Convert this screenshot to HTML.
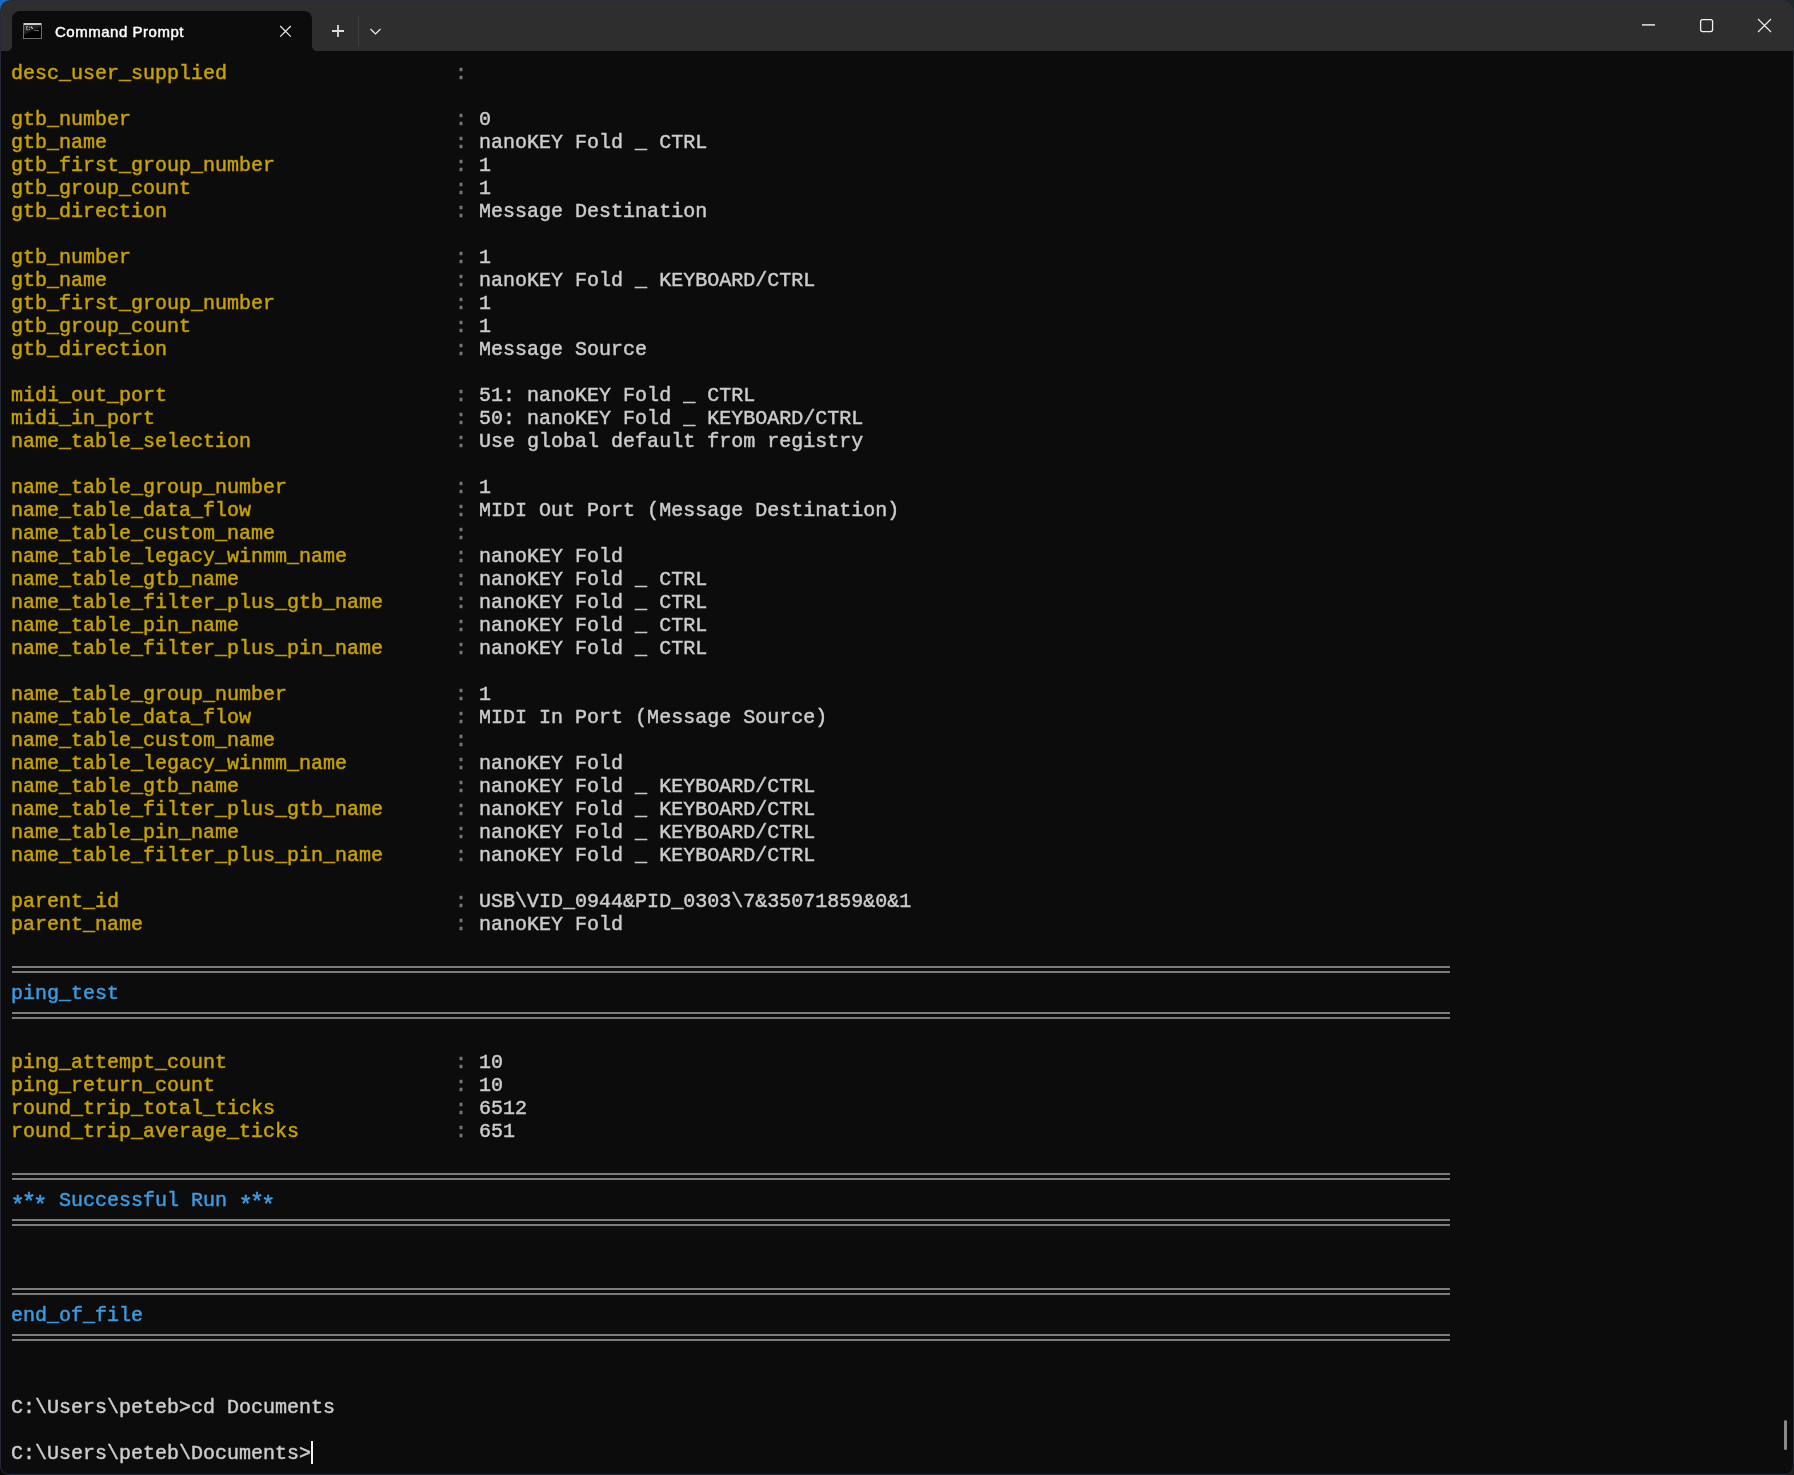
<!DOCTYPE html>
<html><head><meta charset="utf-8"><title>Command Prompt</title>
<style>
html,body{margin:0;padding:0;width:1794px;height:1475px;overflow:hidden;background:#0b0b0b;position:relative;}
#frame{position:absolute;left:0;top:0;width:1794px;height:1475px;border-radius:9px;background:#272b38;}
.cn{position:absolute;width:14px;height:14px;}
#corner{position:absolute;left:0;top:0;width:16px;height:16px;background:radial-gradient(circle at 0 0,#1a6cc0 0,#1a6cc0 6px,#272b38 11px);}
#win{position:absolute;left:1px;top:1px;width:1792px;height:1473px;border-radius:8px;background:#0c0c0c;overflow:hidden;}
#title{position:absolute;left:0;top:0;width:1792px;height:50px;background:#2e2e2e;}
#tab{position:absolute;left:11px;top:10px;width:300px;height:40px;background:#0c0c0c;border-radius:8px 8px 0 0;}
#term{will-change:transform;position:absolute;left:10px;top:61px;-webkit-text-stroke-width:0.45px;font-family:"Liberation Mono",monospace;font-size:20px;line-height:23px;color:#cccccc;}
.r{height:23px;position:relative;white-space:pre;}
.y{color:#c8a200;}
.g{color:#767676;}
.c{color:#3c9ce3;}
.s::before,.s::after{content:"";position:absolute;left:1px;width:1438px;height:2px;background:#7c7c7c;}
.s::before{top:7px;}
.s::after{top:12px;}
#tabinvL{position:absolute;left:6px;top:45px;width:5px;height:5px;background:radial-gradient(circle at 0 0,#2e2e2e 4.6px,#0c0c0c 5.4px);}
#tabinvR{position:absolute;left:311px;top:45px;width:5px;height:5px;background:radial-gradient(circle at 100% 0,#2e2e2e 4.6px,#0c0c0c 5.4px);}
#tabtitle{will-change:transform;position:absolute;left:54px;top:21px;font-family:"Liberation Sans",sans-serif;font-size:15px;letter-spacing:0.52px;-webkit-text-stroke:0.45px #fff;line-height:20px;color:#ffffff;white-space:nowrap;}
#scroll{position:absolute;left:1783px;top:1419px;width:3px;height:30px;border-radius:2px;background:#8a8a8a;}
#cursor{position:absolute;left:310px;top:1440px;width:1.5px;height:23px;background:#f2f2f2;}
.a1,.a2,.a3{display:inline-block;}
.a1{transform:translate(0.7px,5.7px) scale(1.2);}
.a2{transform:translate(0px,3px) scale(1.2);}
.a3{transform:translate(-0.9px,5.7px) scale(1.2);}
</style></head><body>
<div class="cn" style="right:0;top:0;background:#1f292d"></div><div class="cn" style="right:0;bottom:0;background:#1e1e1e"></div><div class="cn" style="left:0;bottom:0;background:#080808"></div>
<div id="frame"></div>
<div id="corner"></div>
<div id="win">
<div id="title"></div>
<div id="tab"></div>
<div id="tabinvL"></div><div id="tabinvR"></div>
<svg id="icons" width="1792" height="50" style="position:absolute;left:0;top:0">
 <g transform="translate(-1,-1)">
  <defs><linearGradient id="ig" x1="0" y1="0" x2="0.6" y2="1"><stop offset="0" stop-color="#3a3a3a"/><stop offset="0.55" stop-color="#1a1a1a"/><stop offset="0.56" stop-color="#000"/></linearGradient></defs>
  <rect x="23.5" y="23.5" width="18" height="15" fill="#000" stroke="#6b6e73" stroke-width="1"/>
  <rect x="24" y="25" width="17" height="13" fill="url(#ig)"/>
  <rect x="24" y="23" width="17" height="2" fill="#c9ccd1"/>
  <path d="M28.2 26.6 h-1.6 v3.2 h1.6" stroke="#9a9a9a" stroke-width="1" fill="none"/>
  <rect x="29" y="26.8" width="1" height="1" fill="#aaa"/><rect x="29" y="28.9" width="1" height="1" fill="#aaa"/>
  <path d="M31 26.6 l1.6 2.2" stroke="#e6e6e6" stroke-width="1.1" fill="none"/>
  <rect x="34" y="30" width="5" height="0.8" fill="#777"/>
  <path d="M280.2 26 L290.8 36.6 M290.8 26 L280.2 36.6" stroke="#f0f0f0" stroke-width="1.15" fill="none"/>
  <path d="M332 31 H344 M338 25 V37" stroke="#dedede" stroke-width="1.8" fill="none"/>
  <rect x="358" y="16" width="1" height="30" fill="#3f3f3f"/>
  <path d="M370.5 29 L375.5 34 L380.5 29" stroke="#f0f0f0" stroke-width="1.2" fill="none"/>
  <rect x="1642" y="24.2" width="13" height="1.4" fill="#f0f0f0"/>
  <rect x="1700.6" y="19.6" width="12" height="12" rx="2" ry="2" stroke="#f0f0f0" stroke-width="1.3" fill="none"/>
  <path d="M1758 19 L1771 32 M1771 19 L1758 32" stroke="#f0f0f0" stroke-width="1.1" fill="none"/>
 </g>
</svg>
<div id="tabtitle">Command Prompt</div>
<div id="scroll"></div>
<div id="term">
<div class="r"><span class="y">desc_user_supplied                   </span><span class="g">:</span> </div>
<div class="r"></div>
<div class="r"><span class="y">gtb_number                           </span><span class="g">:</span> 0</div>
<div class="r"><span class="y">gtb_name                             </span><span class="g">:</span> nanoKEY Fold _ CTRL</div>
<div class="r"><span class="y">gtb_first_group_number               </span><span class="g">:</span> 1</div>
<div class="r"><span class="y">gtb_group_count                      </span><span class="g">:</span> 1</div>
<div class="r"><span class="y">gtb_direction                        </span><span class="g">:</span> Message Destination</div>
<div class="r"></div>
<div class="r"><span class="y">gtb_number                           </span><span class="g">:</span> 1</div>
<div class="r"><span class="y">gtb_name                             </span><span class="g">:</span> nanoKEY Fold _ KEYBOARD/CTRL</div>
<div class="r"><span class="y">gtb_first_group_number               </span><span class="g">:</span> 1</div>
<div class="r"><span class="y">gtb_group_count                      </span><span class="g">:</span> 1</div>
<div class="r"><span class="y">gtb_direction                        </span><span class="g">:</span> Message Source</div>
<div class="r"></div>
<div class="r"><span class="y">midi_out_port                        </span><span class="g">:</span> 51: nanoKEY Fold _ CTRL</div>
<div class="r"><span class="y">midi_in_port                         </span><span class="g">:</span> 50: nanoKEY Fold _ KEYBOARD/CTRL</div>
<div class="r"><span class="y">name_table_selection                 </span><span class="g">:</span> Use global default from registry</div>
<div class="r"></div>
<div class="r"><span class="y">name_table_group_number              </span><span class="g">:</span> 1</div>
<div class="r"><span class="y">name_table_data_flow                 </span><span class="g">:</span> MIDI Out Port (Message Destination)</div>
<div class="r"><span class="y">name_table_custom_name               </span><span class="g">:</span> </div>
<div class="r"><span class="y">name_table_legacy_winmm_name         </span><span class="g">:</span> nanoKEY Fold</div>
<div class="r"><span class="y">name_table_gtb_name                  </span><span class="g">:</span> nanoKEY Fold _ CTRL</div>
<div class="r"><span class="y">name_table_filter_plus_gtb_name      </span><span class="g">:</span> nanoKEY Fold _ CTRL</div>
<div class="r"><span class="y">name_table_pin_name                  </span><span class="g">:</span> nanoKEY Fold _ CTRL</div>
<div class="r"><span class="y">name_table_filter_plus_pin_name      </span><span class="g">:</span> nanoKEY Fold _ CTRL</div>
<div class="r"></div>
<div class="r"><span class="y">name_table_group_number              </span><span class="g">:</span> 1</div>
<div class="r"><span class="y">name_table_data_flow                 </span><span class="g">:</span> MIDI In Port (Message Source)</div>
<div class="r"><span class="y">name_table_custom_name               </span><span class="g">:</span> </div>
<div class="r"><span class="y">name_table_legacy_winmm_name         </span><span class="g">:</span> nanoKEY Fold</div>
<div class="r"><span class="y">name_table_gtb_name                  </span><span class="g">:</span> nanoKEY Fold _ KEYBOARD/CTRL</div>
<div class="r"><span class="y">name_table_filter_plus_gtb_name      </span><span class="g">:</span> nanoKEY Fold _ KEYBOARD/CTRL</div>
<div class="r"><span class="y">name_table_pin_name                  </span><span class="g">:</span> nanoKEY Fold _ KEYBOARD/CTRL</div>
<div class="r"><span class="y">name_table_filter_plus_pin_name      </span><span class="g">:</span> nanoKEY Fold _ KEYBOARD/CTRL</div>
<div class="r"></div>
<div class="r"><span class="y">parent_id                            </span><span class="g">:</span> USB\VID_0944&amp;PID_0303\7&amp;35071859&amp;0&amp;1</div>
<div class="r"><span class="y">parent_name                          </span><span class="g">:</span> nanoKEY Fold</div>
<div class="r"></div>
<div class="r s"></div>
<div class="r"><span class="c">ping_test</span></div>
<div class="r s"></div>
<div class="r"></div>
<div class="r"><span class="y">ping_attempt_count                   </span><span class="g">:</span> 10</div>
<div class="r"><span class="y">ping_return_count                    </span><span class="g">:</span> 10</div>
<div class="r"><span class="y">round_trip_total_ticks               </span><span class="g">:</span> 6512</div>
<div class="r"><span class="y">round_trip_average_ticks             </span><span class="g">:</span> 651</div>
<div class="r"></div>
<div class="r s"></div>
<div class="r"><span class="c"><span class="a1">*</span><span class="a2">*</span><span class="a3">*</span> Successful Run <span class="a1">*</span><span class="a2">*</span><span class="a3">*</span></span></div>
<div class="r s"></div>
<div class="r"></div>
<div class="r"></div>
<div class="r s"></div>
<div class="r"><span class="c">end_of_file</span></div>
<div class="r s"></div>
<div class="r"></div>
<div class="r"></div>
<div class="r">C:\Users\peteb&gt;cd Documents</div>
<div class="r"></div>
<div class="r">C:\Users\peteb\Documents&gt;</div>
</div>
<div id="cursor"></div>
</div>
</body></html>
